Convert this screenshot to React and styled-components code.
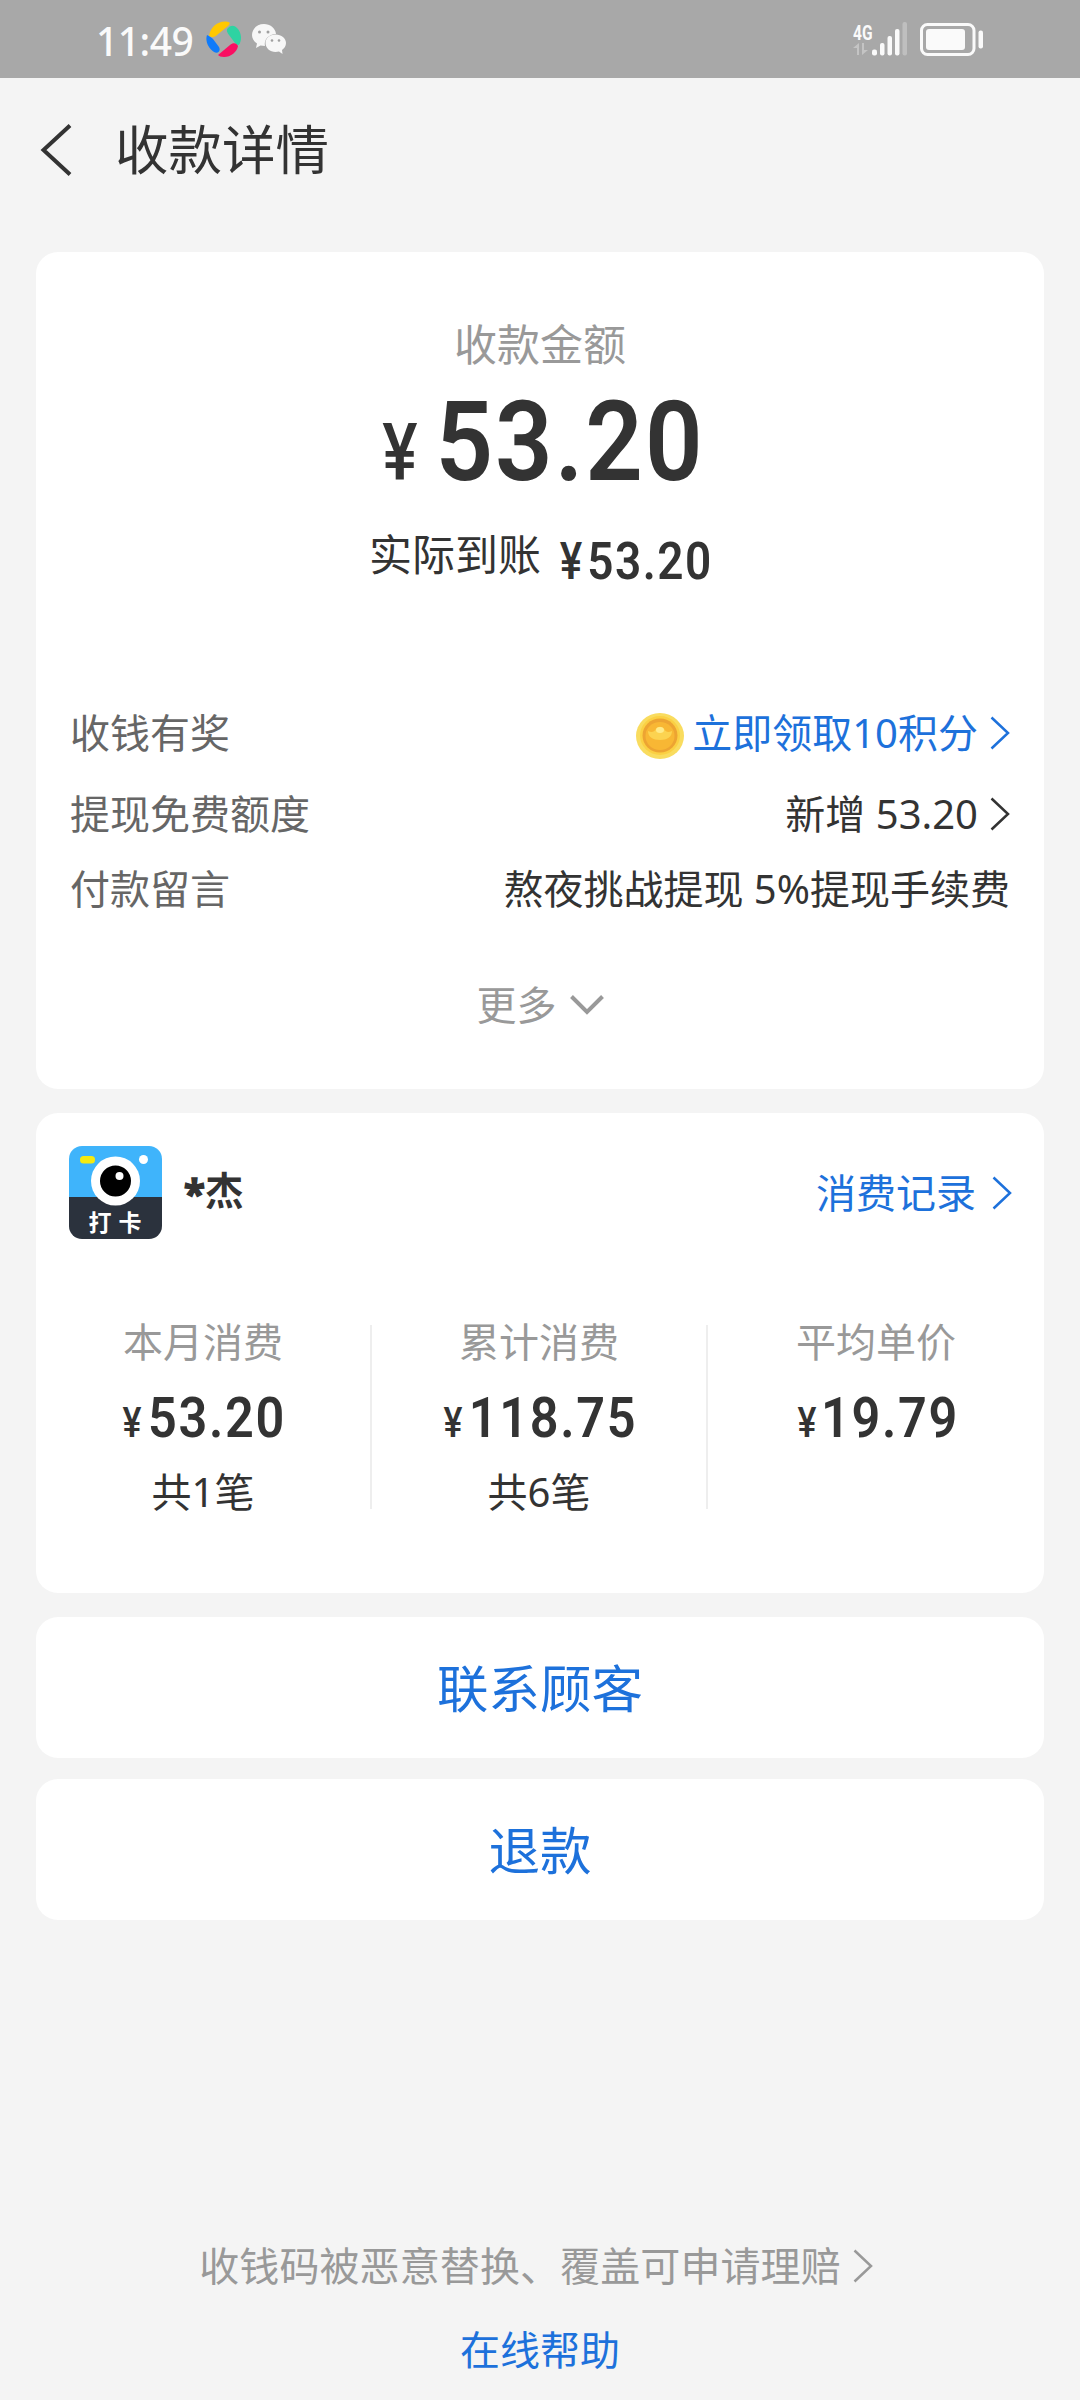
import styled, { createGlobalStyle } from "styled-components";

const stats = [
  { label: "本月消费", amount: "53.20", width: 134, count: "共1笔" },
  { label: "累计消费", amount: "118.75", width: 164, count: "共6笔" },
  { label: "平均单价", amount: "19.79", width: 130 },
];

export default function App() {
  return (
    <>
      <GlobalStyle />
      <Page>
        <StatusBar />
        <Header>
          <BackIcon viewBox="0 0 32 52">
            <path d="M30 1.5L3.5 26L30 50.5" />
          </BackIcon>
          <Title>收款详情</Title>
        </Header>
        <Content>
          <ReceiptCard />
          <CustomerCard />
          <Button>联系顾客</Button>
          <Button>退款</Button>
        </Content>
        <Footer>
          <ClaimLink>
            收钱码被恶意替换、覆盖可申请理赔
            <Arrow />
          </ClaimLink>
          <HelpLink>在线帮助</HelpLink>
        </Footer>
      </Page>
    </>
  );
}

function StatusBar() {
  return (
    <Bar>
      <Time>11:49</Time>
      <SwirlIcon viewBox="0 0 36 36">
        <path fill="#ffc800" d="M3 15C4 7 11 0 20 0.5C24 .8 25 2 22 5L11 14C8 17 5 16 3 15Z" />
        <path fill="#2ed3a2" d="M22 7C25 4 28 4 31 7C35 11 36 17 34 22C33 25 31 24 29 22L23 14C21 11 20 9 22 7Z" />
        <path fill="#fa0f62" d="M12 34L24 24C27 21 31 22 32 25C31 31 25 36 18 36C15 36 13 35 12 34Z" />
        <path fill="#0f7bfa" d="M1 14C3 15 5 16 7 18L13 26C15 30 12 33 8 31C2 27-1 20 1 14Z" />
      </SwirlIcon>
      <WechatIcon viewBox="0 0 34 30">
        <path
          fill="#f7f7f7"
          d="M12 0C5 0 0 5 0 11C0 14.500 2 17.500 5 19.500L4 24L8.500 21.500L13 22A11 10 0 0 1 24 10C23.500 4 18 0 12 0Z"
        />
        <path
          fill="#f7f7f7"
          d="M23.500 10.500C17.500 10.500 13.500 14.500 13.500 19C13.500 24 18 28 23.500 28L27 27.500L30.500 30L30 26C32.500 24 34 22 34 19C34 14.500 29.500 10.500 23.500 10.500Z"
        />
        <g fill="#a0a0a0">
          <circle cx="7.500" cy="8" r="1.500" />
          <circle cx="16" cy="8" r="1.500" />
          <circle cx="20" cy="16.500" r="1.300" />
          <circle cx="27" cy="16.500" r="1.300" />
        </g>
      </WechatIcon>
      <Network>
        <span>4G</span>
        <svg width="16" height="12" viewBox="0 0 16 12" fill="#c4c4c4">
          <path d="M0 5L6 0V12H4V5ZM9 0V12L15 7H11V0Z" />
        </svg>
      </Network>
      <SignalIcon viewBox="0 0 37 34">
        <rect x="0" y="27.500" width="5" height="6" rx="2" />
        <rect x="8" y="21" width="4.500" height="12.500" rx="2" />
        <rect x="15.500" y="14" width="4.500" height="19.500" rx="2" />
        <rect x="23" y="7" width="4.500" height="26.500" rx="2" />
        <rect x="30.500" y="0" width="4.500" height="33.500" rx="2" fill="#bfbfbf" />
      </SignalIcon>
      <BatteryIcon viewBox="0 0 63 33">
        <rect x="1.500" y="1.500" width="52.500" height="30" rx="6" fill="none" stroke="#fafafa" strokeWidth="3" />
        <rect x="6" y="6" width="39" height="21" rx="3" />
        <rect x="58.500" y="7.500" width="4.500" height="18" rx="2" />
      </BatteryIcon>
    </Bar>
  );
}

function ReceiptCard() {
  return (
    <Receipt>
      <ReceiptLabel>收款金额</ReceiptLabel>
      <Total>
        <Yen size={80} width={40}>¥</Yen>
        <Digits size={112} width={260} spacing={0.02}>53.20</Digits>
      </Total>
      <Actual>
        <ActualLabel>实际到账</ActualLabel>
        <ActualAmount>
          <Yen size={51} width={24}>¥</Yen>
          <Digits size={51} width={122}>53.20</Digits>
        </ActualAmount>
      </Actual>
      <Details>
        <Row height={82}>
          <RowLabel>收钱有奖</RowLabel>
          <RowValue color="#1d71db">
            <Coin />
            立即领取10积分
            <Arrow />
          </RowValue>
        </Row>
        <Row height={80}>
          <RowLabel>提现免费额度</RowLabel>
          <RowValue>
            新增 53.20
            <Arrow />
          </RowValue>
        </Row>
        <Row height={70}>
          <RowLabel>付款留言</RowLabel>
          <RowValue>熬夜挑战提现 5%提现手续费</RowValue>
        </Row>
      </Details>
      <More>
        更多
        <DownIcon viewBox="0 0 34 21">
          <path d="M1.500 1.500L17 17L32.500 1.500" />
        </DownIcon>
      </More>
    </Receipt>
  );
}

function CustomerCard() {
  return (
    <Customer>
      <CustomerHead>
        <Avatar>
          <CameraIcon viewBox="0 0 93 93">
            <rect width="93" height="52" fill="#3fb4fb" />
            <rect y="51" width="93" height="42" fill="#2b323d" />
            <rect x="11" y="10" width="15" height="7.500" rx="3.500" fill="#f5ea10" />
            <circle cx="74.500" cy="13.500" r="4.500" fill="#fff" />
            <circle cx="46.500" cy="35" r="24.500" fill="#fff" />
            <circle cx="46.500" cy="35" r="15.500" fill="#000" />
            <circle cx="50.500" cy="30" r="4" fill="#fff" />
          </CameraIcon>
          <AvatarText>打卡</AvatarText>
        </Avatar>
        <Name>
          <Star>*</Star>杰
        </Name>
        <RecordLink>
          消费记录
          <Arrow />
        </RecordLink>
      </CustomerHead>
      <Stats>
        {stats.map((stat) => (
          <Stat key={stat.label}>
            <StatLabel>{stat.label}</StatLabel>
            <StatAmount>
              <Yen size={43} width={20}>¥</Yen>
              <Digits size={56} width={stat.width}>{stat.amount}</Digits>
            </StatAmount>
            {stat.count && <StatCount>{stat.count}</StatCount>}
          </Stat>
        ))}
      </Stats>
    </Customer>
  );
}

function Arrow() {
  return (
    <ArrowIcon viewBox="0 0 20 34">
      <path d="M1.500 1.500L18 17L1.500 32.500" />
    </ArrowIcon>
  );
}

function Coin() {
  return (
    <CoinIcon viewBox="0 0 48 46">
      <ellipse cx="24" cy="23" rx="24" ry="23" fill="#f9dc5f" />
      <ellipse cx="24" cy="22.500" rx="20" ry="19.500" fill="#fbd043" />
      <ellipse cx="24" cy="22.500" rx="17.500" ry="17" fill="#eda432" />
      <ellipse cx="24" cy="23" rx="14.500" ry="14" fill="#f8b734" />
      <path d="M12 18C16 20 18 19 20 16C22 13 26 13 28 16C30 19 32 20 36 18C36 24 31 27 24 27S12 24 12 18Z" fill="#fcd350" />
      <ellipse cx="24" cy="17" rx="4" ry="3" fill="#ffeb8a" />
    </CoinIcon>
  );
}

const GlobalStyle = createGlobalStyle`
  body {
    margin: 0;
    background-color: #f4f4f4;
    color: #333;
    font-family: "Noto Sans", "Noto Sans CJK SC", sans-serif;
    font-size: 40px;
  }
`;

const Page = styled.div`
  display: flex;
  flex-direction: column;
  width: 1080px;
  height: 2400px;
  overflow: hidden;
  background-color: #f4f4f4;
`;

const Bar = styled.div`
  box-sizing: border-box;
  display: flex;
  align-items: center;
  flex-shrink: 0;
  height: 78px;
  padding: 0 97px 0 96px;
  background-color: #a8a8a8;
`;

const Time = styled.span`
  width: 110px;
  padding-top: 3px;
  color: #fafafa;
  font-size: 39px;
  font-weight: 500;
  line-height: 75px;
  letter-spacing: -0.5px;
`;

const SwirlIcon = styled.svg`
  width: 36px;
  height: 36px;
`;

const WechatIcon = styled.svg`
  width: 34px;
  height: 30px;
  margin-left: 10px;
`;

const Network = styled.div`
  display: flex;
  flex-direction: column;
  width: 19px;
  margin-left: auto;

  span {
    color: #fafafa;
    font-family: Roboto, sans-serif;
    font-size: 21px;
    font-weight: 700;
    line-height: 20px;
    transform: scaleX(0.74);
    transform-origin: left;
  }
`;

const SignalIcon = styled.svg`
  width: 37px;
  height: 34px;
  fill: #fafafa;
`;

const BatteryIcon = styled.svg`
  width: 63px;
  height: 33px;
  margin-left: 11px;
  fill: #fafafa;
`;

const Header = styled.header`
  display: flex;
  align-items: center;
  height: 144px;
  padding-left: 40px;
  margin-bottom: 30px;
`;

const BackIcon = styled.svg`
  width: 32px;
  height: 52px;
  fill: none;
  stroke: #333;
  stroke-width: 4;
`;

const Title = styled.h1`
  margin: 0 0 0 43px;
  font-size: 53.5px;
  font-weight: 400;
  line-height: 80px;
`;

const Content = styled.main`
  display: flex;
  flex-direction: column;
  padding: 0 36px;
`;

const Card = styled.section`
  box-sizing: border-box;
  background-color: #fff;
  border-radius: 22px;
`;

const Receipt = styled(Card)`
  display: flex;
  flex-direction: column;
  align-items: center;
  height: 837px;
  padding: 63px 34px 0;
  margin-bottom: 24px;
`;

const ReceiptLabel = styled.div`
  color: #999;
  font-size: 43px;
  line-height: 60px;
`;

/* Amounts are set in a slightly condensed face */
const Yen = styled.span`
  display: inline-flex;
  justify-content: center;
  width: ${(props) => props.width}px;
  font-size: ${(props) => props.size}px;
  font-weight: 500;
  transform: scaleX(0.83);
`;

const Digits = styled.span`
  display: inline-flex;
  justify-content: center;
  width: ${(props) => props.width}px;
  font-size: ${(props) => props.size}px;
  font-weight: 600;
  letter-spacing: ${(props) => props.spacing || 0.034}em;
  transform: scaleX(0.9);
`;

const Total = styled.div`
  display: flex;
  align-items: baseline;
  gap: 20px;
  height: 100px;
  margin-top: 17px;
  font-family: Roboto, sans-serif;
  line-height: 100px;
`;

const Actual = styled.div`
  display: flex;
  align-items: center;
  gap: 18px;
  height: 60px;
  margin-top: 33px;
`;

const ActualLabel = styled.span`
  font-size: 43px;
  line-height: 60px;
`;

const ActualAmount = styled.span`
  display: flex;
  align-items: baseline;
  gap: 6px;
  padding-top: 13px;
  font-family: Roboto, sans-serif;
  line-height: 60px;
`;

const Details = styled.div`
  align-self: stretch;
  margin-top: 107px;
`;

const Row = styled.div`
  display: flex;
  justify-content: space-between;
  align-items: center;
  height: ${(props) => props.height}px;
  line-height: 60px;
`;

const RowLabel = styled.span`
  color: #666;
`;

const RowValue = styled.span`
  display: flex;
  align-items: center;
  color: ${(props) => props.color || "#333"};
`;

const ArrowIcon = styled.svg`
  width: 20px;
  height: 34px;
  margin-left: 12px;
  fill: none;
  stroke: currentColor;
  stroke-width: 2.5;
`;

const CoinIcon = styled.svg`
  width: 48px;
  height: 46px;
  margin: 6px 8px 0 0;
`;

const More = styled.div`
  display: flex;
  align-items: center;
  margin-top: 51px;
  color: #999;
  line-height: 60px;
`;

const DownIcon = styled.svg`
  width: 34px;
  height: 21px;
  margin-left: 13px;
  fill: none;
  stroke: #999;
  stroke-width: 4;
`;

const Customer = styled(Card)`
  height: 480px;
  padding-top: 33px;
  margin-bottom: 24px;
`;

const CustomerHead = styled.div`
  display: flex;
  align-items: center;
  height: 93px;
  padding: 0 32px 0 33px;
  line-height: 60px;
`;

const Avatar = styled.div`
  position: relative;
  width: 93px;
  height: 93px;
  border-radius: 13px;
  overflow: hidden;
`;

const CameraIcon = styled.svg`
  display: block;
  width: 93px;
  height: 93px;
`;

const AvatarText = styled.span`
  position: absolute;
  right: 0;
  bottom: 4px;
  left: 0;
  padding-left: 6px;
  color: #fff;
  font-size: 23px;
  font-weight: 700;
  line-height: 26px;
  letter-spacing: 7px;
  text-align: center;
`;

const Name = styled.span`
  display: flex;
  margin: -2px 0 0 22px;
  font-size: 38.5px;
  font-weight: 700;
`;

const Star = styled.span`
  padding-top: 3px;
  -webkit-text-stroke: 1.5px #333;
`;

const RecordLink = styled.span`
  display: flex;
  align-items: center;
  gap: 4px;
  margin-left: auto;
  color: #1d71db;
`;

const Stats = styled.div`
  display: grid;
  grid-template-columns: repeat(3, 336px);
  margin-top: 86px;
`;

const Stat = styled.div`
  box-sizing: border-box;
  display: flex;
  flex-direction: column;
  align-items: center;
  height: 184px;
  border-right: 2px solid #eee;

  &:last-child {
    border-right: none;
  }
`;

const StatLabel = styled.div`
  color: #999;
  line-height: 34px;
`;

const StatAmount = styled.div`
  display: flex;
  align-items: baseline;
  gap: 8px;
  height: 60px;
  margin-top: 29px;
  font-family: Roboto, sans-serif;
  line-height: 60px;
`;

const StatCount = styled.div`
  margin-top: 27px;
  line-height: 34px;
`;

const Button = styled.button`
  height: 141px;
  padding: 0;
  margin-bottom: 21px;
  border: none;
  border-radius: 22px;
  background-color: #fff;
  color: #1d71db;
  font-family: inherit;
  font-size: 51.5px;
  line-height: 60px;
`;

const Footer = styled.footer`
  display: flex;
  flex-direction: column;
  align-items: center;
  gap: 24px;
  margin-top: auto;
  padding-bottom: 20px;
  line-height: 60px;
`;

const ClaimLink = styled.div`
  display: flex;
  align-items: center;
  padding-right: 8px;
  color: #999;
  letter-spacing: 0.1px;
`;

const HelpLink = styled.div`
  color: #1d71db;
`;
